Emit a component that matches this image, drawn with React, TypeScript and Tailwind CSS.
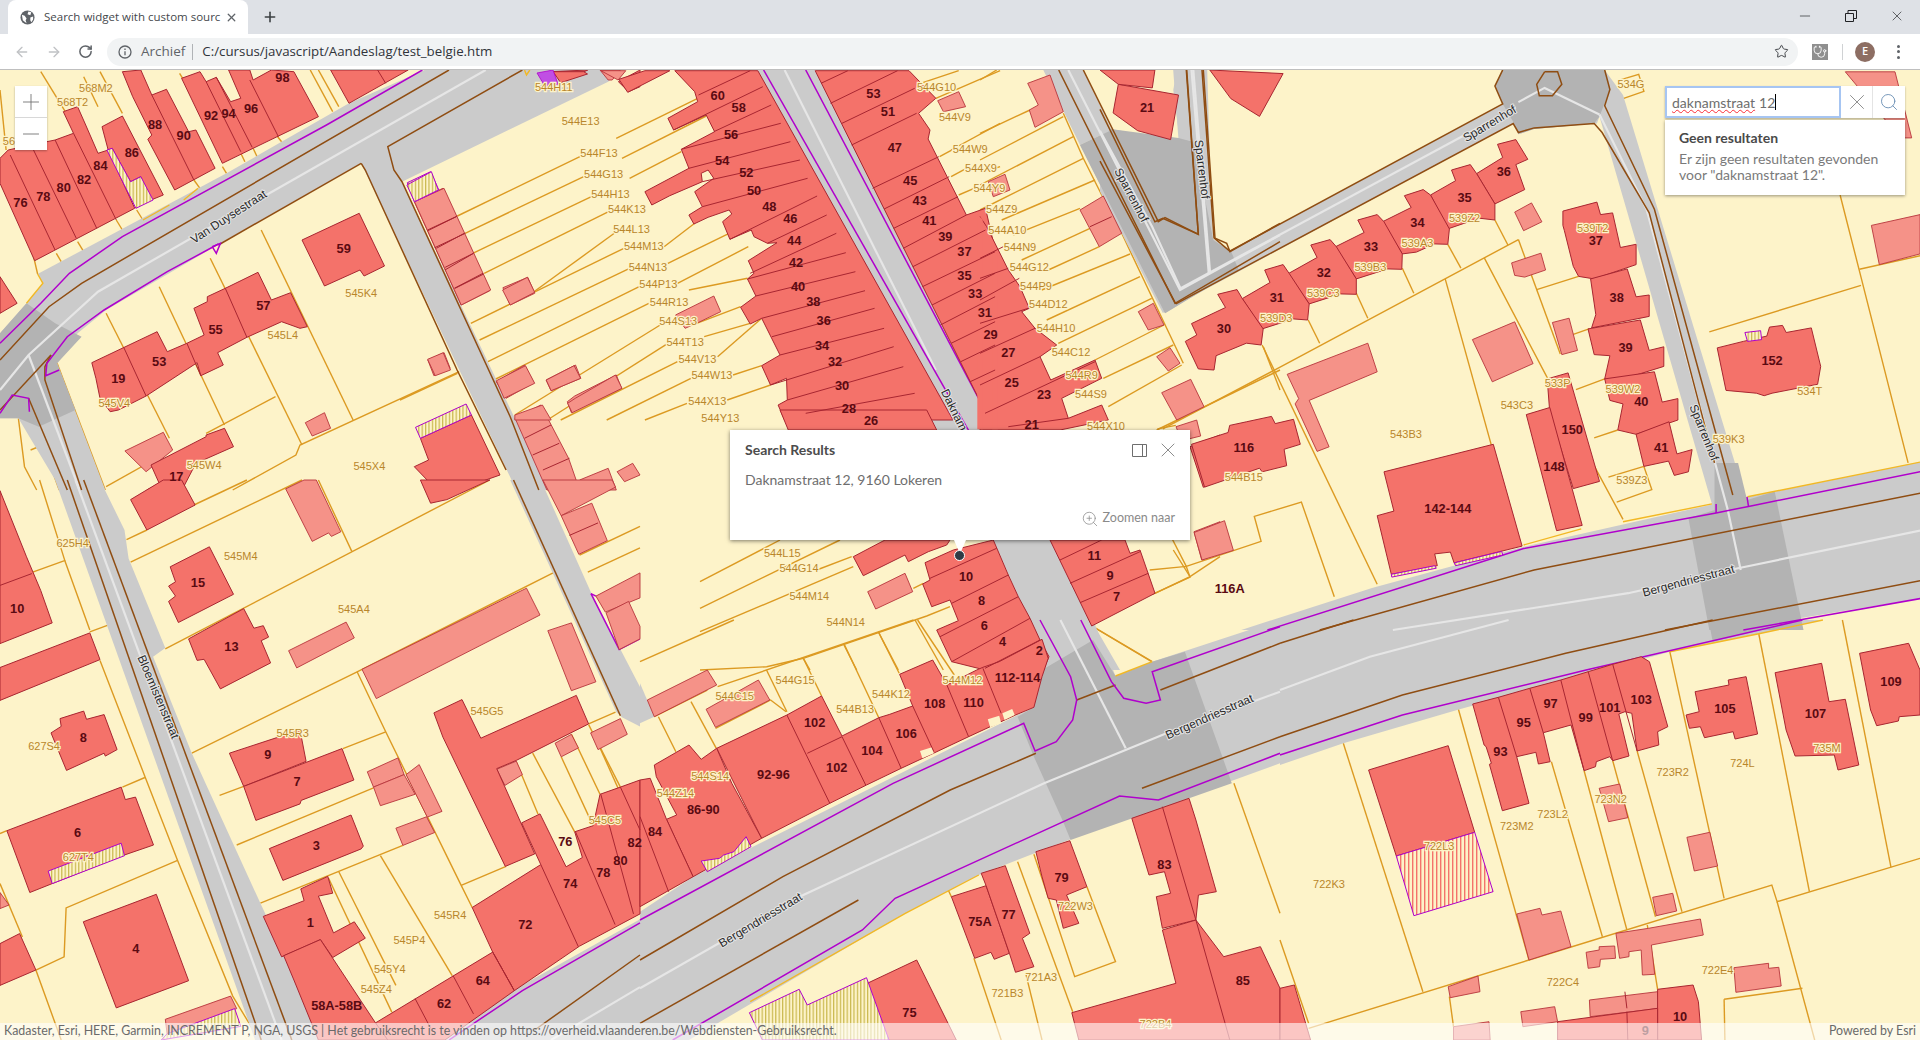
import React from "react";
import { ArrowLeft, ArrowRight, RotateCw, Star, Stethoscope, Plus, Minus, X, Search, ZoomIn } from "lucide-react";

type T = {
  x: number; y: number; sx: number; sy: number;
  parcels?: string[]; roads?: string[]; dark?: string[]; white?: string[]; brown?: string[]; purple?: string[]; gold?: string[];
  light?: string[]; b?: string[]; patch?: string[]; cream?: string[]; hatch?: string[]; redhatch?: string[]; seg?: string[];
  labels?: [number, number, string][]; nums?: [number, number, string][]; rl?: [number, number, string, number][];
};

const tiles: T[] = [
  {
    x: 0, y: 70, sx: 2.45, sy: 3,
    parcels: [
      "100,5 160,125", "0,60 15,240", "205,20 240,110", "245,5 300,130", "440,10 470,70", "760,0 815,125", "780,0 830,110",
      "138,550 150,575", "190,515 205,545", "285,450 300,480", "335,420 350,450", "545,290 555,310", "590,250 600,275", "620,235 630,260", "475,330 490,355", "680,200 690,215",
      "25,255 92,612", "640,480 865,1050", "515,565 740,1125", "390,650 550,1065", "260,730 415,1105", "140,880 258,1260",
      "1125,905 735,1125 725,1155 570,1260", "675,980 505,1090", "420,1140 260,1250", "45,1045 60,1190 90,1260", "75,1140 105,1125 145,1260",
    ],
    roads: ["1040,0 855,100 555,310 92,612 105,640 65,700 0,790 0,1045 45,1045 150,1260 258,1260 140,880 190,790 260,720 540,520 885,280 1265,1260 1345,1260 985,335 1490,35 1520,0"],
    dark: ["65,700 135,760 200,800 140,880 185,1020 95,1070 45,1045 0,1045 0,790"],
    white: ["1190,0 660,370 240,665 70,855 0,960", "70,855 195,1260"],
    brown: ["1100,0 200,640 120,710 0,870", "885,280 535,525", "125,855 110,890 110,930 200,1260", "125,855 0,1020", "70,985 165,1260", "1280,0 950,230 965,300 985,335 1250,1040 1320,1260", "885,280 895,300 1120,900 1240,1200"],
    purple: ["1035,0 800,165 300,500 170,610 100,700 0,820", "535,522 410,605 255,720 165,800 115,880 112,917 145,900", "520,530 540,520 530,550 520,530", "0,1030 30,975 70,985 72,1025"],
    gold: ["92,612 105,640 65,700", "350,450 415,405", "450,390 485,355", "1285,0 1290,15 1298,0"],
    light: [
      "1048,870 1088,848 1103,895 1063,917", "748,1058 795,1028 810,1075 765,1098", "306,1143 400,1087 423,1140 358,1205",
      "1015,395 1085,355 1200,662 1130,705", "1232,653 1293,622 1310,670 1250,705", "1216,935 1285,885 1308,938 1240,985", "1338,930 1410,885 1423,925 1350,962", "1390,995 1408,978 1510,915 1523,955 1400,1028",
      "1262,1045 1325,1005 1393,1165 1420,1260 1340,1260", "1420,1230 1490,1195 1510,1260 1430,1260", "1512,1205 1550,1180 1568,1215 1530,1235", "1470,0 1520,0 1500,30 1490,30",
    ],
    b: [
      "20,240 75,225 135,210 180,190 155,125 190,110 210,165 240,250 265,240 330,415 85,572 0,340 0,265",
      "250,170 300,138 400,375 370,390 345,320 320,335 275,235 265,240",
      "300,5 345,0 372,75 408,58 462,185 480,180 527,295 428,360 362,208 372,195 325,80",
      "445,25 490,5 505,35 530,22 565,95 590,85 560,0 612,0 620,30 665,0 720,5 780,140 620,235 545,280",
      "810,0 1000,0 855,100", "1350,5 1440,0 1380,35", "1515,35 1568,0 1568,50 1540,65", "0,620 42,700 0,730",
      "740,510 880,430 942,588 892,618 882,600 795,648",
      "225,878 385,785 410,845 458,820 500,795 475,715 508,695 508,680 552,655 632,607 665,690 712,668 753,770 735,775 690,755 605,802 533,848 547,885 492,917 483,878 358,978 290,1020 270,1025 245,985 235,925",
      "370,1185 505,1100 505,1095 550,1075 572,1130 480,1180 450,1250 430,1260 360,1260 390,1240",
      "1030,1105 1155,1035 1225,1215 1120,1260 1070,1260 1015,1190 1050,1170",
    ],
    hatch: ["262,240 275,235 320,335 345,320 375,390 333,415", "998,338 1055,305 1075,360 1015,395", "1018,1072 1142,1002 1155,1035 1030,1105"],
    seg: [
      "25,255 135,540", "80,235 187,505", "135,210 237,475", "180,190 285,450", "372,75 475,330", "505,35 590,245", "530,22 618,232", "612,30 682,200", "925,0 945,40",
      "303,832 358,978", "458,820 492,917", "552,655 605,802", "1048,482 1118,440", "1065,533 1140,490", "1090,600 1160,550", "1115,655 1185,612", "1285,1105 1350,1065", "1305,1155 1370,1120", "1330,1200 1395,1165",
    ],
    labels: [[235, 55, "568M2"], [178, 97, "568T2"], [22, 213, "56"], [885, 670, "545K4"], [693, 795, "545L4"], [280, 998, "545V4"], [500, 1185, "545W4"], [905, 1187, "545X4"]],
    nums: [[692, 22, "98"], [517, 135, "92"], [560, 130, "94"], [615, 115, "96"], [380, 163, "88"], [450, 195, "90"], [323, 248, "86"], [246, 285, "84"], [206, 328, "82"], [156, 352, "80"], [106, 378, "78"], [50, 397, "76"], [842, 535, "59"], [645, 707, "57"], [528, 778, "55"], [390, 873, "53"], [290, 925, "19"], [432, 1220, "17"]],
    rl: [[560, 440, "Van Duysestraat", -33]],
  },
  {
    x: 0, y: 480, sx: 2.45, sy: 2.8,
    parcels: [
      "97,0 160,230 220,420", "160,225 80,258", "268,405 220,425", "245,505 355,830 435,1065 570,1445 635,1568", "0,990 17,982", "355,833 300,860",
      "435,1065 162,1198 157,1335 88,1372 150,1568", "0,1130 55,1280", "310,167 360,140", "475,70 605,0", "320,230 740,0", "405,473 1200,0", "470,765 875,537 1355,260",
      "875,537 945,705 1130,1135 1157,1197", "780,0 862,200", "538,883 597,858", "840,752 945,705", "580,1022 915,862", "638,1185 987,1023",
      "805,1115 960,1490", "830,1097 970,1415", "932,1052 1108,1388", "1130,1135 1240,1082", "1265,790 1318,935", "1305,765 1408,985", "1375,775 1450,960", "1400,712 1470,880", "1442,685 1520,860", "1442,683 1508,650",
      "1420,210 1568,130", "1440,258 1568,190", "1470,750 1568,1000",
    ],
    roads: [
      "135,0 245,0 305,140 315,220 405,470 375,495 470,765 640,1190 760,1480 780,1568 625,1568",
      "1250,0 1325,0 1450,320 1568,580 1568,690 1525,665 1510,650",
      "1568,1568 1090,1568 1255,1430 1568,1230",
    ],
    white: ["185,0 690,1568", "1568,1420 1350,1568"],
    brown: ["165,0 640,1568", "205,0 715,1568", "1258,0 1520,660", "1568,1330 1310,1540"],
    purple: ["1448,318 1517,475 1568,445", "1448,318 1460,325", "1568,1240 1280,1430 1100,1568"],
    light: [
      "707,478 848,398 868,442 727,526", "887,530 1290,303 1323,378 922,612", "1342,422 1400,400 1460,565 1400,590", "700,25 745,0 775,0 835,145 812,158 805,148 765,172",
      "900,817 975,778 990,825 915,860", "915,860 990,825 1017,880 932,912", "995,825 1027,797 1083,928 1047,944", "970,975 1045,943 1065,987 987,1023",
      "1217,810 1265,787 1280,825 1237,855", "1360,737 1400,712 1417,750 1375,775", "1447,708 1520,668 1537,712 1465,755", "0,1155 22,1190 0,1200", "405,1510 565,1445 580,1480 410,1555",
      "1330,0 1500,0 1508,20 1375,100", "1375,100 1450,65 1488,170 1418,208", "1460,325 1568,260 1568,330 1483,370", "1485,372 1540,340 1568,410 1568,445 1517,475",
    ],
    b: [
      "0,30 65,215 100,310 128,400 0,458", "0,525 220,428 245,503 0,617",
      "417,243 513,187 572,320 437,399 413,340 430,325 413,297 430,285", "462,445 597,360 622,415 645,408 658,440 640,450 663,512 540,585 500,502 483,505",
      "125,708 150,690 147,668 205,647 212,670 255,657 287,755 258,773 255,765 163,813", "17,982 297,860 307,895 332,888 376,1022 300,1052 73,1155", "204,1237 383,1160 462,1402 285,1478", "0,1298 48,1270 88,1372 0,1415",
      "562,765 735,700 750,788 597,858", "597,858 838,752 867,840 738,897 735,907 627,953", "660,1032 860,938 890,1025 885,1033 693,1121",
      "1063,652 1132,615 1178,723 1412,603 1442,683 1265,785 1217,808 1310,1047 1238,1082 1085,720",
      "1157,1197 1325,1077 1278,960 1323,935 1387,1083 1427,1057 1408,985 1453,968 1470,880 1520,860 1568,840 1568,1215 1420,1305 1260,1430 1207,1322",
      "920,1520 1207,1322 1260,1430 1090,1568 940,1568", "645,1222 745,1178 737,1145 803,1110 815,1157 780,1165 817,1268 868,1237 895,1283 815,1337 785,1287 690,1335",
      "695,1332 785,1287 920,1520 950,1568 780,1568 745,1470 720,1400", "320,55 400,0 445,0 478,70 360,140", "1030,0 1200,0 1095,55 1055,65",
    ],
    hatch: ["118,1095 297,1017 305,1052 128,1130", "410,1550 575,1480 590,1530 395,1568"],
    seg: ["0,295 78,262", "1325,1077 1417,1307", "1410,985 1507,1245", "1472,880 1552,1215", "1520,860 1568,980", "1110,1388 1160,1495", "1017,1452 1055,1535", "1207,1322 1260,1430", "1395,155 1465,120"],
    labels: [[178, 175, "625H4"], [590, 213, "545M4"], [867, 362, "545A4"], [717, 708, "545R3"], [1193, 648, "545G5"], [108, 746, "627S4"], [192, 1055, "627T4"], [1482, 953, "545C5"], [1103, 1218, "545R4"], [1003, 1288, "545P4"], [955, 1368, "545Y4"], [922, 1425, "545Z4"]],
    nums: [[42, 360, "10"], [485, 288, "15"], [567, 465, "13"], [204, 720, "8"], [656, 768, "9"], [728, 845, "7"], [190, 988, "6"], [775, 1022, "3"], [333, 1312, "4"], [760, 1238, "1"], [1385, 1012, "76"], [1397, 1130, "74"], [1478, 1100, "78"], [1520, 1065, "80"], [1555, 1015, "82"], [1287, 1245, "72"], [1183, 1402, "64"], [1088, 1467, "62"], [825, 1470, "58A-58B"]],
    rl: [[388, 607, "Bloemistenstraat", 67]],
  },
  {
    x: 400, y: 60, sx: 2.613, sy: 3,
    parcels: [
      "150,468 470,290", "565,235 778,115", "170,520 480,350", "580,295 800,168", "190,580 500,410", "600,355 735,275", "220,640 545,455", "645,400 755,335",
      "350,695 560,520", "185,790 585,565", "690,560 770,490", "208,840 600,625", "700,610 860,520", "230,905 625,680", "725,670 910,560", "245,960 650,730", "755,690 908,655",
      "300,1065 680,795", "775,790 890,740", "385,1080 700,850", "795,830 915,790", "420,1080 725,905", "830,890 945,775", "540,1080 760,955", "870,945 945,917", "640,1080 750,1030", "855,1020 968,975", "0,1020 150,940",
      "1360,70 1460,32", "1400,115 1568,32", "1440,270 1568,190", "1410,290 1450,265", "1440,350 1480,325", "1460,405 1500,385", "1540,330 1568,320",
    ],
    roads: ["930,30 1085,30 1568,1120 1440,1120"],
    white: ["1005,30 1400,930"],
    purple: ["950,30 1490,1120", "1060,30 1560,1120"],
    light: [
      "38,425 115,385 237,690 160,735", "252,962 328,917 352,970 272,1015", "382,960 455,917 472,955 395,992", "438,1030 458,1015 563,945 580,985 450,1058", "268,690 333,652 352,697 288,735",
      "720,765 820,708 838,755 775,790 745,805 730,780", "72,898 113,878 132,930 92,947", "300,1065 372,1035 395,1080 300,1080", "1405,122 1460,95 1478,140 1420,155", "525,32 590,32 570,60",
    ],
    b: [
      "718,32 935,32 1445,1080 1005,1080 988,1035 1012,1020 1010,955 968,975 945,917 993,885 945,775 915,792 890,742 930,708 908,657 925,640 910,602 985,548 960,550 925,530 918,510 862,538 843,485 867,462 860,450 805,472 768,492 755,465 790,440 770,395 820,355 805,330 787,340 790,365 705,407 658,435 640,395 755,325 735,268 822,215 800,165 715,210 700,175 778,125 770,95",
      "1085,32 1330,32 1400,115 1355,160 1385,210 1380,237 1480,465 1530,445 1555,570 1555,1080 1540,1080",
      "400,35 480,35 490,42 420,68", "572,58 640,32 705,32 595,97",
    ],
    hatch: ["18,375 82,335 100,390 38,425"],
    seg: [
      "780,105 915,32", "715,210 948,80", "820,215 970,135", "735,268 995,190", "755,325 1020,245", "790,365 1045,300", "790,440 1065,355", "862,538 1090,408", "960,550 1115,465", "915,640 1140,520", "908,657 1165,578", "930,708 1190,635", "945,775 1215,692", "972,830 1240,745", "993,885 1265,805", "968,975 1290,860", "1012,1020 1315,920", "1060,1060 1345,1000",
      "1100,70 1170,32", "1125,130 1300,32", "1155,190 1345,85", "1180,255 1350,160", "1235,385 1408,290", "1265,447 1435,350", "1290,505 1458,410", "1315,565 1480,465", "1340,620 1530,510", "1365,680 1555,575", "1390,735 1555,640", "1412,795 1555,710", "1440,850 1555,785", "1465,905 1555,855", "1490,965 1555,930",
      "72,510 150,468", "95,565 168,520", "118,622 192,580", "142,685 217,640",
    ],
    labels: [[402, 80, "544H11"], [1402, 80, "544G10"], [1450, 170, "544V9"], [472, 183, "544E13"], [520, 280, "544F13"], [1490, 267, "544W9"], [532, 342, "544G13"], [1518, 325, "544X9"], [550, 402, "544H13"], [1540, 385, "544Y9"], [593, 447, "544K13"], [605, 508, "544L13"], [637, 558, "544M13"], [648, 620, "544N13"], [675, 672, "544P13"], [703, 725, "544R13"], [727, 783, "544S13"], [745, 845, "544T13"], [777, 898, "544V13"], [815, 945, "544W13"], [803, 1023, "544X13"], [837, 1075, "544Y13"]],
    nums: [[830, 107, "60"], [885, 143, "58"], [865, 222, "56"], [842, 302, "54"], [905, 337, "52"], [925, 390, "50"], [965, 440, "48"], [1020, 475, "46"], [1030, 542, "44"], [1035, 607, "42"], [1040, 678, "40"], [1080, 725, "38"], [1107, 782, "36"], [1103, 855, "34"], [1137, 905, "32"], [1155, 975, "30"], [1173, 1045, "28"], [1237, 100, "53"], [1275, 155, "51"], [1293, 263, "47"], [1333, 360, "45"], [1358, 420, "43"], [1383, 480, "41"], [1425, 530, "39"], [1475, 575, "37"], [1475, 647, "35"], [1503, 700, "33"], [1528, 757, "31"], [1543, 822, "29"]],
    rl: [[1465, 1090, "Daknamstraat", 64]],
  },
  {
    x: 700, y: 410, sx: 3, sy: 3,
    parcels: [
      "0,515 240,390", "0,595 420,390", "0,665 460,470", "0,780 200,770 310,745 680,618 750,590", "310,745 330,780", "432,705 470,780", "535,665 595,780", "645,630 730,780",
      "350,480 455,440", "640,535 670,520", "1175,648 1355,755", "1420,420 1470,500 1365,550", "1470,500 1560,440",
    ],
    roads: ["680,0 850,0 1185,650 1260,780 1060,780 990,640 880,390"],
    light: ["503,545 615,490 638,545 527,597", "1428,50 1490,30 1502,78 1445,92", "1482,365 1560,335 1560,430 1505,450"],
    b: [
      "460,440 555,390 750,390 740,405 685,425 625,455 615,435 490,497",
      "675,458 760,420 880,390 925,495 955,560 990,625 1020,690 1047,740 1030,780 855,780 755,755 710,660 775,632 750,570 695,590 668,522 690,510",
      "1050,390 1275,390 1290,430 1320,420 1365,550 1175,648",
      "1470,110 1560,75 1560,210 1510,232", "240,0 680,0 710,60 265,60",
    ],
    seg: ["690,505 890,415", "755,580 925,495", "720,680 955,560", "755,755 990,625", "855,775 1020,690", "1080,450 1205,390", "1110,520 1320,425", "1140,578 1345,490"],
    labels: [[1218, 47, "544X10"], [247, 428, "544L15"], [297, 475, "544G14"], [328, 557, "544M14"], [437, 636, "544N14"]],
    nums: [[513, 30, "26"], [995, 42, "21"], [1183, 436, "11"], [798, 500, "10"], [1230, 495, "9"], [1250, 560, "7"], [845, 572, "8"], [853, 645, "6"], [908, 695, "4"], [1018, 722, "2"]],
  },
  {
    x: 640, y: 620, sx: 2.45, sy: 3,
    parcels: [
      "0,125 230,0", "35,290 165,210", "190,200 670,0", "310,150 360,275", "400,115 445,228", "500,72 585,293", "585,38 635,160", "680,0 770,165", "125,245 187,385", "185,325 320,240 358,275", "45,290 88,395",
      "925,725 1060,1175", "965,703 1065,1070 1165,1025 1095,800", "818,1015 885,1260", "945,1060 985,1260", "755,810 763,830", "1455,490 1568,880", "1255,125 1110,20",
    ],
    roads: [
      "0,875 130,770 925,285 965,262 990,150 960,0 1110,0 1165,168 1255,125 1568,0 1568,430 1050,660 830,765 650,880 120,1260 0,1260",
      "0,190 35,290 0,310",
    ],
    dark: ["925,290 965,410 1035,600 1055,660 1450,490 1335,95 1255,125 1165,168 1110,60 985,150 965,262"],
    white: ["0,1105 400,825 990,490 1290,340 1568,215", "1030,0 1190,385"],
    brown: ["0,1020 350,770 760,510 970,400", "0,1210 535,840", "1070,240 1165,195", "1275,210 1568,70", "1230,505 1568,350"],
    purple: [
      "0,900 620,490 940,310 968,393 1020,365 1060,300 1070,240 1055,170 980,0",
      "1080,0 1155,185 1185,235 1240,250 1275,240 1255,155 1568,20",
      "80,1260 545,930 625,835 1175,528 1270,540 1568,400",
    ],
    gold: ["270,1145 650,880 830,765", "1165,168 1255,125", "835,155 880,128"],
    light: ["18,240 165,150 188,195 35,290", "162,268 290,180 318,240 185,322"],
    b: [
      "188,385 360,285 445,228 495,348 585,293 612,283 668,258 636,163 717,120 752,195 825,150 840,142 880,125 985,58 1000,115 985,170 965,262 920,285 805,350 722,398 640,445 555,495 465,550 298,655",
      "35,435 120,375 150,418 188,385 225,490 298,655 130,770 65,598 90,585 40,470",
      "0,480 25,475 65,598 130,770 0,860",
      "548,1095 678,1020 775,1260 610,1260",
      "763,830 848,797 905,1000 868,1018 860,997 820,1015", "836,760 895,737 955,940 937,955 965,1040 920,1057 905,1000 848,797",
      "970,695 1053,662 1095,800 1045,825 1075,910 1037,925 1020,840 1000,835 985,770",
      "1205,595 1345,535 1362,600 1412,815 1368,825 1362,900 1280,925 1265,830 1300,820 1285,755 1247,765",
      "1058,1178 1313,1090 1280,930 1362,900 1430,1010 1520,980 1568,1105 1568,1260 1075,1260",
    ],
    cream: ["852,298 880,287 885,310 858,322", "888,280 912,267 918,285 893,300", "686,393 715,382 720,400 692,415"],
    hatch: ["150,723 195,715 205,705 230,695 260,650 272,680 165,755", "268,1178 390,1108 410,1155 555,1073 610,1260 300,1260"],
    seg: ["360,285 465,550", "410,400 495,350", "495,350 553,495", "585,293 640,445", "668,258 720,395", "752,195 805,350", "840,145 885,280", "1280,560 1362,900", "1362,900 1445,1260", "0,590 70,815"],
    labels: [[380, 180, "544G15"], [232, 228, "544C15"], [615, 222, "544K12"], [527, 267, "544B13"], [790, 180, "544M12"], [172, 467, "544S14"], [87, 518, "544Z14"], [1067, 857, "722W3"], [983, 1070, "721A3"], [900, 1118, "721B3"], [1263, 1212, "722B4"]],
    nums: [[925, 172, "112-114"], [722, 250, "108"], [817, 247, "110"], [428, 308, "102"], [652, 340, "106"], [568, 390, "104"], [482, 443, "102"], [327, 463, "92-96"], [155, 567, "86-90"], [37, 635, "84"], [1285, 733, "83"], [1033, 772, "79"], [903, 882, "77"], [833, 905, "75A"], [1477, 1080, "85"], [660, 1178, "75"]],
    rl: [[1395, 290, "Bergendriesstraat", -24], [295, 900, "Bergendriesstraat", -31]],
  },
  {
    x: 1280, y: 620, sx: 2.45, sy: 3,
    parcels: [
      "155,370 350,1115", "437,268 610,1020", "665,425 790,950", "745,452 850,930", "815,422 920,890", "875,393 985,875", "955,95 1088,835", "1173,42 1297,815", "1378,0 1497,742",
      "70,1225 610,1020 1205,795 1218,845 1568,715", "1218,845 1310,1260", "900,915 925,1108", "415,1130 425,1220", "1088,1138 1280,1105", "1088,1138 1090,1260", "0,960 70,1210",
    ],
    roads: ["0,0 1330,0 1170,42 955,95 440,268 155,370 0,435"],
    dark: ["1050,0 1280,0 1060,65"],
    white: ["0,210 220,110 560,0"],
    brown: ["0,350 300,225 700,100 1060,0", "0,70 180,0"],
    purple: ["0,405 300,285 750,150 1280,0"],
    gold: ["955,95 1170,42 1330,0"],
    light: [
      "580,882 637,865 642,885 688,873 713,980 610,1020", "782,505 832,492 852,593 805,605", "997,652 1053,637 1072,738 1015,753", "913,832 962,820 972,873 922,887",
      "823,940 903,925 1030,897 1037,945 910,975 918,1063 888,1065 885,990 855,995 855,1010 832,1015", "750,997 782,990 782,980 820,978 822,1015 785,1018 783,1040 755,1045", "412,1100 485,1068 490,1115 417,1133",
      "1112,1043 1197,1030 1197,1045 1222,1042 1228,1098 1117,1117", "758,1140 925,1115 930,1165 760,1190", "590,1175 673,1160 680,1205 595,1220", "425,1220 512,1205 515,1260 425,1260",
    ],
    b: [
      "472,252 535,232 612,205 688,180 755,155 815,133 885,110 905,125 950,320 925,335 928,375 875,393 862,280 845,275 830,282 855,408 815,422 808,410 775,425 773,440 745,452 713,315 645,338 662,425 633,432 627,397 580,410 610,550 545,572 513,433 518,430 505,380 500,375",
      "1017,215 1100,195 1098,180 1142,170 1170,342 1115,357 1110,335 1040,353 1030,320 1003,325 995,285 1027,275",
      "1213,158 1327,130 1345,245 1385,238 1418,435 1367,450 1358,405 1262,408 1240,330",
      "1420,100 1540,70 1568,150 1568,285 1517,290 1515,303 1462,317 1447,270",
      "217,450 412,377 477,637 285,708",
      "925,1108 1012,1095 1025,1145 1033,1260 925,1260", "680,1205 925,1165 925,1260 680,1260", "0,1105 35,1095 75,1260 0,1260",
    ],
    redhatch: ["285,708 477,637 522,815 328,887"],
    seg: ["535,232 580,410", "612,205 645,338", "688,180 745,452", "755,155 815,422", "815,133 875,393", "845,1115 850,1165", "850,1175 852,1260"],
    labels: [[962, 457, "723R2"], [1133, 428, "724L"], [1340, 385, "735M"], [810, 537, "723N2"], [668, 582, "723L2"], [580, 617, "723M2"], [390, 677, "722L3"], [120, 793, "722K3"], [693, 1087, "722C4"], [1072, 1050, "722E4"]],
    nums: [[1497, 183, "109"], [885, 237, "103"], [808, 262, "101"], [663, 250, "97"], [749, 292, "99"], [597, 308, "95"], [540, 395, "93"], [1090, 265, "105"], [1312, 280, "107"], [980, 1190, "10"], [895, 1230, "9"]],
  },
  {
    x: 1100, y: 70, sx: 1.912, sy: 2.8,
    parcels: [
      "1415,350 1455,580 1545,1100", "1452,558 1568,520", "1165,733 1455,603", "990,30 1030,12 1040,60 1000,80", "800,475 330,843 120,1005", "800,475 880,795", "735,527 905,1000 1000,1258", "660,585 750,1060",
      "755,420 780,490", "665,488 690,555", "578,555 600,625", "490,625 512,695", "398,700 420,765", "310,770 530,1440", "835,615 915,578", "905,740 935,725", "910,895 965,865", "945,1030 990,1008",
      "972,1140 1040,1110", "988,1210 1055,1175 1040,1110", "165,1390 308,1320 295,1250 385,1210 448,1475", "95,1400 165,1390 172,1420 100,1468", "165,1390 130,1290",
      "110,1005 145,995", "1090,580 1105,590 1112,645 1100,650", "1143,855 1160,870 1162,920 1150,925",
    ],
    roads: [
      "140,0 205,0 215,470 248,507 770,97 755,45 768,0 965,0 1000,70 1240,1225 1175,1240 955,130 950,150 830,165 805,178 790,150 150,655 120,680 0,340 0,100 20,165 135,195 150,195",
      "270,1568 520,1450 810,1335 1175,1215 1568,1098 1568,1480 1200,1568",
    ],
    dark: [
      "20,165 150,190 175,200 205,470 250,505 265,560 150,655 110,610",
      "770,95 755,45 770,0 965,0 975,55 955,130 945,150 830,165 800,180 790,145",
      "1125,1255 1290,1180 1345,1568 1165,1568", "1175,1100 1220,1100 1240,1220 1175,1240",
    ],
    white: ["175,0 208,570", "155,610 795,105", "155,615 100,440 0,170", "955,125 850,50 800,90", "955,125 1045,390 1200,1230 1225,1400", "560,1568 1010,1465 1220,1395 1568,1290"],
    brown: [
      "0,110 105,425 120,415 188,460 165,0", "195,0 218,470 248,507 770,95 755,45 770,0", "145,655 0,255", "145,655 790,150 800,175 830,162 945,150 960,175 1050,400 1175,1100",
      "965,0 975,55 965,100 1060,390 1210,1190", "850,5 875,5 883,40 865,72 840,72 835,40 850,5", "420,1568 830,1400 1568,1185", "1080,1568 1568,1430",
    ],
    purple: ["320,1568 810,1340 1178,1240 1240,1222 1568,1125", "1230,1568 1568,1480", "1237,1195 1240,1222", "1178,1215 1178,1240"],
    gold: ["1000,1265 1170,1215", "810,1330 920,1285", "1238,1195 1568,1098"],
    light: [
      "793,398 825,372 845,425 810,450", "787,540 843,513 852,560 812,580 793,575", "865,707 897,695 913,785 883,797", "712,755 793,705 828,822 750,873",
      "358,852 512,765 530,845 400,925 438,1055 415,1068 373,935 380,920", "180,1295 238,1262 255,1345 195,1372", "1475,435 1568,405 1568,515 1490,545", "1425,5 1520,5 1552,190 1530,190",
    ],
    b: [
      "35,40 150,70 135,195 72,170 25,120", "0,0 105,0 100,50 35,40", "210,0 350,10 305,130 250,80",
      "760,208 795,195 818,250 795,265 812,335 755,375 720,290 770,245", "672,280 708,265 720,290 755,375 755,420 725,415 665,445 632,350 680,310",
      "582,352 618,335 632,350 668,445 665,488 640,487 605,510 578,515 540,425 595,385", "493,420 530,405 543,425 578,515 577,558 550,557 490,585 450,495 505,455",
      "403,490 440,475 452,495 490,585 490,628 460,627 400,655 360,570 415,525", "315,560 350,545 362,570 400,655 397,700 370,697 310,725 272,640 325,595",
      "225,628 262,615 272,640 312,725 308,770 280,765 222,800 218,840 188,837 163,760 185,742 175,710 240,665",
      "885,395 950,370 957,405 980,400 995,497 1025,488 1025,545 945,585 915,578 905,550 888,450 885,435", "938,585 1008,557 1025,635 1050,630 1050,690 940,722 948,685",
      "933,725 1033,700 1050,785 1078,775 1078,830 990,870 965,865 975,800 945,797", "965,865 1060,845 1075,930 1105,920 1105,980 1025,1020 990,1008 1000,935 975,925",
      "1025,1020 1088,985 1103,1075 1132,1063 1125,1125 1098,1135 1087,1095 1040,1110", "855,865 895,848 955,1152 905,1172 860,960", "815,965 860,945 922,1275 873,1290",
      "175,1048 245,1015 248,995 280,985 328,970 335,990 370,978 383,1048 352,1062 357,1108 310,1125 305,1115 200,1168",
      "543,1125 752,1048 807,1333 677,1380 670,1350 640,1355 645,1388 557,1412 530,1248 562,1235",
      "1180,778 1230,760 1275,745 1280,720 1305,715 1312,735 1360,722 1378,830 1372,880 1285,905 1270,912 1255,905 1197,897",
    ],
    hatch: ["1233,735 1263,730 1265,755 1238,760", "557,1412 640,1388 643,1395 558,1420", "677,1380 768,1348 770,1358 680,1388"],
    labels: [[1015, 38, "534G"], [697, 413, "539Z2"], [942, 443, "539T2"], [607, 483, "539A3"], [517, 552, "539B3"], [427, 625, "539C3"], [337, 693, "539D3"], [875, 877, "533P"], [1000, 892, "539W2"], [797, 938, "543C3"], [585, 1020, "543B3"], [1357, 898, "534T"], [1202, 1032, "539K3"], [275, 1140, "544B15"], [1017, 1148, "539Z3"]],
    nums: [[90, 105, "21"], [772, 283, "36"], [697, 357, "35"], [607, 427, "34"], [518, 495, "33"], [428, 567, "32"], [338, 637, "31"], [237, 723, "30"], [948, 478, "37"], [988, 638, "38"], [1005, 778, "39"], [1035, 928, "40"], [1073, 1057, "41"], [903, 1007, "150"], [868, 1110, "148"], [275, 1058, "116"], [665, 1228, "142-144"], [1285, 812, "152"], [248, 1453, "116A"]],
    rl: [[745, 150, "Sparrenhof", -31], [195, 278, "Sparrenhof", 83], [60, 350, "Sparrenhof", 62], [1155, 1015, "Sparrenhof", 68], [1125, 1430, "Bergendriesstraat", -15]],
  },
  {
    x: 980, y: 70, sx: 3, sy: 3,
    parcels: [
      "250,130 310,265 365,375 425,490 610,880", "0,190 150,120", "0,270 250,140", "0,345 280,200", "0,420 310,265", "65,450 345,330", "100,495 300,415", "125,570 330,475", "205,600 358,530", "185,660 450,552", "200,750 480,620", "235,820 515,685", "345,870 552,765", "370,925 580,825", "385,1010 605,885", "530,1080 900,900", "850,830 900,960", "0,30 50,0",
    ],
    roads: [
      "190,0 310,0 395,180 300,225", "300,225 395,180 640,215 700,510 750,545 770,600 555,730",
      "580,60 590,0 670,0 700,510 640,215 600,215",
    ],
    dark: ["300,225 395,180 640,215 700,510 750,545 770,600 555,730"],
    white: ["265,0 600,660 900,495", "640,0 690,605"],
    brown: ["236,0 585,700 900,515", "310,0 535,455 555,443 655,493 620,0", "670,0 705,505 740,520 750,545 900,460"],
    light: [
      "143,40 210,15 250,125 165,172 148,120 175,105", "300,420 370,378 425,490 358,530", "475,725 520,700 552,765 505,780", "530,860 570,833 600,880 565,903", "545,968 632,928 672,1010 590,1050", "25,335 75,313 90,360 40,380",
    ],
    b: ["0,440 20,470 55,540 85,600 120,650 148,715 125,725 165,775 230,825 180,860 212,930 345,870 365,925 245,985 265,1045 365,1005 385,1050 240,1080 0,1080"],
    patch: ["-8,434 8,448 8,1078 -8,1078", "37,548 53,548 53,1078 37,1078"],
    seg: ["0,565 70,530", "0,625 85,595", "0,690 118,625", "0,760 145,715", "0,850 165,775", "0,945 180,860", "15,1030 345,875", "85,1070 265,1045", "330,470 395,440"],
    labels: [[65, 417, "544Z9"], [82, 480, "544A10"], [120, 532, "544N9"], [148, 590, "544G12"], [168, 648, "544P9"], [205, 703, "544D12"], [228, 773, "544H10"], [273, 845, "544C12"], [305, 915, "544R9"], [333, 972, "544S9"]],
    nums: [[85, 847, "27"], [95, 937, "25"], [192, 972, "23"]],
  },
];

const pts = (t: T, s: string) =>
  s.trim().split(/\s+/).map((p) => {
    const [a, b] = p.split(",").map(Number);
    return `${(t.x + a / t.sx).toFixed(1)},${(t.y + b / t.sy).toFixed(1)}`;
  }).join(" ");

type K = "parcels" | "roads" | "dark" | "white" | "brown" | "purple" | "gold" | "light" | "b" | "patch" | "cream" | "hatch" | "redhatch" | "seg";

function Layer({ k, kind, ...rest }: { k: K; kind: "polygon" | "polyline" } & React.SVGProps<SVGPolygonElement>) {
  return (
    <g {...(rest as any)}>
      {tiles.flatMap((t, i) =>
        (t[k] ?? []).map((s, j) =>
          kind === "polygon" ? <polygon key={`${i}-${j}`} points={pts(t, s)} /> : <polyline key={`${i}-${j}`} points={pts(t, s)} fill="none" />
        )
      )}
    </g>
  );
}

function MapDrawing() {
  return (
    <svg viewBox="0 70 1920 970" className="block h-full w-full" style={{ fontFamily: '"Liberation Sans", Arial, sans-serif' }}>
      <defs>
        <pattern id="hy" width="3.4" height="3.4" patternUnits="userSpaceOnUse">
          <rect width="3.4" height="3.4" fill="#fdf3c8" />
          <rect width="1.2" height="3.4" fill="#c9b84e" />
        </pattern>
        <pattern id="hr" width="4" height="4" patternUnits="userSpaceOnUse">
          <rect width="4" height="4" fill="#fdf3c8" />
          <rect width="1.4" height="4" fill="#f4736b" />
        </pattern>
      </defs>
      <rect x="0" y="70" width="1920" height="970" fill="#fdf3c9" />
      <Layer k="parcels" kind="polyline" stroke="#dc9a22" strokeWidth={1.4} />
      <Layer k="roads" kind="polygon" fill="#cbcbcb" />
      <Layer k="dark" kind="polygon" fill="#b3b3b3" />
      <Layer k="white" kind="polyline" stroke="#e6e6e6" strokeWidth={2.2} />
      <Layer k="brown" kind="polyline" stroke="#8f4d12" strokeWidth={1.5} />
      <Layer k="gold" kind="polyline" stroke="#f2b824" strokeWidth={1.4} />
      <Layer k="purple" kind="polyline" stroke="#b000cc" strokeWidth={1.5} />
      <Layer k="light" kind="polygon" fill="#f59288" stroke="#b7363c" strokeWidth={0.9} />
      <Layer k="b" kind="polygon" fill="#f4726a" stroke="#a82631" strokeWidth={1} />
      <Layer k="patch" kind="polygon" fill="#f4726a" />
      <Layer k="cream" kind="polygon" fill="#fdf3c9" />
      <Layer k="hatch" kind="polygon" fill="url(#hy)" stroke="#b000cc" strokeWidth={1} />
      <Layer k="redhatch" kind="polygon" fill="url(#hr)" stroke="#b000cc" strokeWidth={1} />
      <Layer k="seg" kind="polyline" stroke="#a82631" strokeWidth={1} />
      <polygon points="537,73 553,70 558,84 546,88" fill="#c04fe4" stroke="#b000cc" strokeWidth={0.8} />
      {tiles.map((t, i) => (
        <g key={i}>
          {(t.labels ?? []).map(([x, y, s], j) => (
            <text key={j} x={t.x + x / t.sx} y={t.y + y / t.sy} fontSize={11} fill="#b9862b" stroke="#fdf3c9" strokeWidth={2.4} paintOrder="stroke" textAnchor="middle" dominantBaseline="central">{s}</text>
          ))}
          {(t.nums ?? []).map(([x, y, s], j) => (
            <text key={j} x={t.x + x / t.sx} y={t.y + y / t.sy} fontSize={12.8} fontWeight={700} fill="#5a0a12" textAnchor="middle" dominantBaseline="central">{s}</text>
          ))}
          {(t.rl ?? []).map(([x, y, s, r], j) => {
            const px = t.x + x / t.sx;
            const py = t.y + y / t.sy;
            return (
              <text key={j} x={px} y={py} transform={`rotate(${r} ${px} ${py})`} fontSize={12} fill="#2a2a2a" stroke="#e4e4e4" strokeWidth={2} paintOrder="stroke" textAnchor="middle" dominantBaseline="central">{s}</text>
            );
          })}
        </g>
      ))}
    </svg>
  );
}

const ui = { fontFamily: '"Open Sans", "Noto Sans", sans-serif' };
const esri = { fontFamily: 'Lato, "Open Sans", sans-serif' };

export default function App() {
  return (
    <div className="flex h-[1040px] w-[1920px] flex-col overflow-hidden bg-white" style={ui}>
      <div className="flex h-[34px] items-end bg-[#dee1e6] pl-2">
        <div className="flex h-[34px] w-[240px] items-center rounded-t-lg bg-white pl-3 pr-2">
          <svg width="15" height="15" viewBox="0 0 16 16" className="shrink-0">
            <circle cx="8" cy="8" r="7.5" fill="#5f6368" />
            <path d="M2 5l3 1 2 3-1 2 1 3-4-3zM9 1.5l3 1-1 3-3-1zM11 8l3-1 0 3-2 3-1-2z" fill="#fff" />
          </svg>
          <div className="relative ml-[9px] w-[176px] whitespace-nowrap text-[11.500px] text-[#45484c]">
            Search widget with custom sourc
          </div>
          <X className="ml-[5px] text-[#5f6368]" size={13} strokeWidth={2.4} />
        </div>
        <Plus className="mb-[9px] ml-[14px] text-[#3c4043]" size={16} strokeWidth={2.4} />
        <div className="ml-auto mb-[10px] flex items-center gap-[32px] pr-[15px] text-[#202124]">
          <Minus size={16} strokeWidth={1} />
          <svg width="12" height="12" viewBox="0 0 12 12" fill="none" stroke="currentColor">
            <path d="M.5 3.5h8v8h-8zM3 3.5V.5h8.500v8H8.500" />
          </svg>
          <X size={16} strokeWidth={1} />
        </div>
      </div>
      <div className="flex h-[36px] items-center border-b border-[#bfbfbf] bg-white text-[#5f6368]">
        <ArrowLeft className="ml-[14px] text-[#c0c2c5]" size={16} />
        <ArrowRight className="ml-[16px] text-[#c0c2c5]" size={16} />
        <RotateCw className="ml-[16px]" size={15} strokeWidth={2.4} />
        <div className="ml-[14px] flex h-[28px] w-[1691px] items-center rounded-full bg-[#f1f3f4] pl-[11px] pr-[9px]">
          <svg width="14" height="14" viewBox="0 0 14 14" fill="none" stroke="#5f6368" strokeWidth="1.3">
            <circle cx="7" cy="7" r="6" />
            <path d="M7 6.200v4M7 3.600v1.300" />
          </svg>
          <span className="ml-[9px] text-[13.5px] leading-none">Archief</span>
          <span className="ml-[7px] h-[16px] w-px bg-[#b0b3b6]" />
          <span className="ml-[9px] text-[13.3px] leading-none text-[#30343a]">C:/cursus/javascript/Aandeslag/test_belgie.htm</span>
          <Star className="ml-auto text-[#45484c]" size={15} strokeWidth={1.6} />
        </div>
        <div className="ml-[14px] flex h-4 w-4 items-center justify-center bg-[#8f8f8f]">
          <Stethoscope className="text-white" size={14} strokeWidth={1.5} />
        </div>
        <span className="ml-[14px] h-[16px] w-px bg-[#d0d2d4]" />
        <div className="ml-[12px] flex h-5 w-5 items-center justify-center rounded-full bg-[#8d6e63] text-[11px] font-semibold text-white">E</div>
        <div className="ml-[22px] flex flex-col gap-[2.5px]">
          <span className="h-[3px] w-[3px] rounded-full bg-[#5f6368]" />
          <span className="h-[3px] w-[3px] rounded-full bg-[#5f6368]" />
          <span className="h-[3px] w-[3px] rounded-full bg-[#5f6368]" />
        </div>
      </div>
      <div className="relative min-h-0 flex-1 overflow-hidden" style={esri}>
        <MapDrawing />

        <div className="absolute left-[15px] top-[16px] flex w-[32px] flex-col bg-white text-[#6e6e6e] shadow-[0_1px_2px_rgba(0,0,0,0.3)]">
          <div className="flex h-[32px] items-center justify-center border-b border-[#d8d8d8]"><Plus size={26} strokeWidth={0.8} /></div>
          <div className="flex h-[32px] items-center justify-center"><Minus size={26} strokeWidth={0.8} /></div>
        </div>

        <div className="absolute left-[1665px] top-[16px] w-[240px]">
          <div className="flex h-[32px] bg-white shadow-[0_1px_2px_rgba(0,0,0,0.3)]">
            <div className="flex w-[176px] items-center border-2 border-[#a6c5f2] pl-[5px] text-[14px] text-[#6e6e6e]">
              <span className="underline decoration-red-500 decoration-wavy decoration-1">daknamstraat</span>
              <span className="ml-1">12</span>
              <span className="h-4 w-px bg-black" />
            </div>
            <div className="flex w-[32px] items-center justify-center border-r border-[#e4e4e4]"><X className="text-[#6e6e6e]" size={26} strokeWidth={0.7} /></div>
            <div className="flex w-[32px] items-center justify-center">
              <Search className="text-[#6b8fb5]" size={20} strokeWidth={1.1} />
            </div>
          </div>
          <div className="mt-[2px] h-[75px] bg-white px-[14px] pt-[8px] shadow-[0_1px_3px_rgba(0,0,0,0.4)]">
            <div className="text-[14px] font-bold leading-[20px] text-[#4a4a4a]">Geen resultaten</div>
            <div className="mt-[3px] text-[14px] leading-[16px] text-[#7a7a7a]">Er zijn geen resultaten gevonden<br />voor "daknamstraat 12".</div>
          </div>
        </div>

        <div className="absolute left-[730px] top-[360px] h-[110px] w-[460px] bg-white shadow-[0_1px_4px_rgba(0,0,0,0.5)]">
          <div className="flex items-center justify-between pl-[15px] pr-[10px] pt-[8px]">
            <span className="text-[14px] font-bold leading-[18px] text-[#4c4c4c]">Search Results</span>
            <div className="flex items-center gap-[9px] text-[#6e6e6e]">
              <svg width="15" height="13" viewBox="0 0 15 13" fill="none" stroke="currentColor">
                <path d="M.5 .5h14v12h-14zM10.500 .5v12" />
              </svg>
              <X size={24} strokeWidth={0.8} />
            </div>
          </div>
          <div className="pl-[15px] pt-[9px] text-[14px] leading-[18px] text-[#6e6e6e]">Daknamstraat 12, 9160 Lokeren</div>
          <div className="absolute bottom-[12px] right-[15px] flex items-center gap-[4px] text-[12.500px] text-[#8a8a8a]">
            <ZoomIn size={18} strokeWidth={1} />
            <span>Zoomen naar</span>
          </div>
        </div>
        <div className="absolute left-[954px] top-[470px] h-0 w-0 border-x-[6px] border-t-[14px] border-x-transparent border-t-white" />
        <div className="absolute left-[954px] top-[480px] h-[11px] w-[11px] rounded-full border border-white bg-[#2f3b45]" />

        <div className="absolute inset-x-0 bottom-0 flex h-[17px] items-center justify-between bg-white/60 px-[4px] text-[12.400px] text-[#6a6a6a]">
          <span>Kadaster, Esri, HERE, Garmin, INCREMENT P, NGA, USGS | Het gebruiksrecht is te vinden op https://overheid.vlaanderen.be/Webdiensten-Gebruiksrecht.</span>
          <span>Powered by Esri</span>
        </div>
      </div>
    </div>
  );
}
